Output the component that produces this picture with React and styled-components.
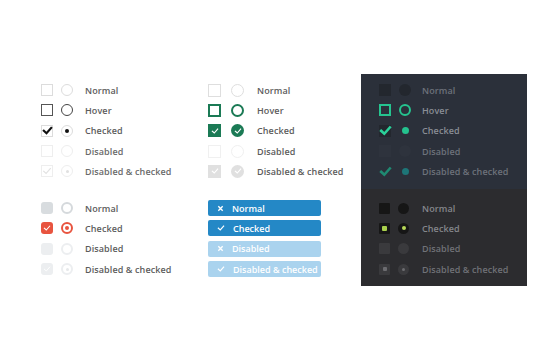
import React from "react";
import styled, { createGlobalStyle, css } from "styled-components";

const Global = createGlobalStyle`
  html, body { margin: 0; padding: 0; background: #fff; }
  body { font-family: "Open Sans", "Liberation Sans", sans-serif; }
`;

const Page = styled.div`
  width: 550px;
  height: 340px;
  padding: 74px 0 0 41px;
  box-sizing: border-box;
  display: grid;
  grid-template-columns: 167px 153px 166px;
  grid-template-rows: 115px 97px;
`;

const Cell = styled.div`
  padding: ${(p) => (p.$bottom ? "9px 0 0" : "6px 0 0")};
  ${(p) =>
    p.$dark &&
    css`
      background: ${p.$bottom ? "#2c2c2f" : "#2b303a"};
      padding-left: 18px;
    `}
`;

const Row = styled.div`
  display: flex;
  align-items: center;
  height: 20.3px;
`;

const Controls = styled.div`
  display: flex;
  align-items: center;
  gap: ${(p) => p.$gap}px;
  width: ${(p) => p.$w}px;
  flex: none;
`;

const Label = styled.span`
  font-size: 9px;
  font-weight: 600;
  letter-spacing: 0.1px;
  white-space: nowrap;
  color: ${(p) => p.$color || "#5c5c5c"};
`;

const Base = styled.span`
  position: relative;
  display: inline-flex;
  align-items: center;
  justify-content: center;
  box-sizing: border-box;
  flex: none;
  width: ${(p) => p.$s || 12}px;
  height: ${(p) => p.$s || 12}px;
  svg { position: absolute; }
`;

/* minimal */
const MinBox = styled(Base)`
  border: 1px solid ${(p) => (p.$st === "hover" ? "#555" : p.$st === "disabled" || p.$st === "dischecked" ? "#eeeeee" : "#dcdcdc")};
`;
const MinRadio = styled(Base)`
  border-radius: 50%;
  border: 1px solid ${(p) => (p.$st === "hover" ? "#444" : p.$st === "disabled" || p.$st === "dischecked" ? "#eeeeee" : "#dcdcdc")};
`;
const Dot = styled.span`
  width: ${(p) => p.$d}px;
  height: ${(p) => p.$d}px;
  border-radius: ${(p) => (p.$sq ? "1px" : "50%")};
  background: ${(p) => p.$c};
  ${(p) => p.$ring && css`box-shadow: 0 0 0 ${p.$ring}px ${p.$rc};`}
`;

/* flat red */
const FlatBox = styled(Base)`
  border-radius: 3px;
  background: ${(p) => (p.$st === "checked" ? "#e8543f" : p.$st === "normal" ? "#d8dcdf" : "#eceef0")};
`;
const FlatRadio = styled(Base)`
  border-radius: 50%;
  border: 2px solid ${(p) => (p.$st === "checked" ? "#e8543f" : p.$st === "normal" ? "#d5d9dc" : "#eceef0")};
  background: ${(p) => (p.$st === "checked" ? "#e8543f" : "#fff")};
`;

/* square green */
const SqBox = styled(Base)`
  ${(p) =>
    p.$st === "checked"
      ? css`background: #1b7a55;`
      : p.$st === "dischecked"
      ? css`background: #e0e0e0;`
      : p.$st === "hover"
      ? css`border: 2px solid #1b7a55;`
      : css`border: 1px solid ${p.$st === "disabled" ? "#f0f0f0" : "#dedede"};`}
`;
const SqRadio = styled(SqBox)`
  border-radius: 50%;
`;

/* dark */
const DarkBox = styled(Base)`
  background: ${(p) => (p.$st === "disabled" || p.$st === "dischecked" ? "#2e333d" : "#23272e")};
  ${(p) => p.$st === "hover" && css`background: transparent; border: 2px solid #25c48f;`}
  ${(p) => p.$st === "dischecked" && css`background: transparent;`}
`;
const DarkRadio = styled(DarkBox)`
  border-radius: 50%;
  ${(p) => (p.$st === "checked" || p.$st === "dischecked") && css`background: transparent;`}
`;

/* futurico */
const FutBox = styled(Base)`
  border-radius: 1px;
  background: ${(p) => (p.$st === "disabled" || p.$st === "dischecked" ? "#3a3a3d" : "#161616")};
`;
const FutRadio = styled(FutBox)`
  border-radius: 50%;
`;

const Tag = styled.div`
  display: flex;
  align-items: center;
  width: 113px;
  height: 16px;
  border-radius: 2px;
  background: ${(p) => (p.$off ? "#aad3ee" : "#2488c6")};
  color: #fff;
  font-size: 9px;
  font-weight: 600;
  white-space: nowrap;
  box-sizing: border-box;
  padding-left: 9px;
  gap: 8px;
`;

const Check = ({ c, w = 10, sw = 2 }) => (
  <svg width={w} height={w} viewBox="0 0 12 12">
    <path d="M2 6.3 L4.9 9 L10 3.2" fill="none" stroke={c} strokeWidth={sw} strokeLinecap="square" />
  </svg>
);

const Cross = () => (
  <svg width="7" height="7" viewBox="0 0 8 8">
    <path d="M1.5 1.5 L6.5 6.5 M6.5 1.5 L1.5 6.5" stroke="#fff" strokeWidth="1.6" />
  </svg>
);

const minimal = ["normal", "hover", "checked", "disabled", "dischecked"];
const names = { normal: "Normal", hover: "Hover", checked: "Checked", disabled: "Disabled", dischecked: "Disabled & checked" };
const flat = ["normal", "checked", "disabled", "dischecked"];

export default function App() {
  return (
    <>
      <Global />
      <Page>
        <Cell>
          {minimal.map((st) => (
            <Row key={st}>
              <Controls $w={44} $gap={8}>
                <MinBox $st={st}>
                  {st === "checked" && <Check c="#111" w={11} sw={2.4} />}
                  {st === "dischecked" && <Check c="#e2e2e2" w={10} sw={1.4} />}
                </MinBox>
                <MinRadio $st={st}>
                  {st === "checked" && <Dot $d={4} $c="#111" />}
                  {st === "dischecked" && <Dot $d={3} $c="#e0e0e0" />}
                </MinRadio>
              </Controls>
              <Label $color={st === "disabled" || st === "dischecked" ? "#6a6a6a" : "#5c5c5c"}>{names[st]}</Label>
            </Row>
          ))}
        </Cell>
        <Cell>
          {minimal.map((st) => (
            <Row key={st}>
              <Controls $w={49} $gap={10}>
                <SqBox $st={st} $s={13}>
                  {(st === "checked" || st === "dischecked") && <Check c="#fff" w={8} sw={1.7} />}
                </SqBox>
                <SqRadio $st={st} $s={13}>
                  {(st === "checked" || st === "dischecked") && <Check c="#fff" w={8} sw={1.7} />}
                </SqRadio>
              </Controls>
              <Label>{names[st]}</Label>
            </Row>
          ))}
        </Cell>
        <Cell $dark>
          {minimal.map((st) => (
            <Row key={st}>
              <Controls $w={43} $gap={8}>
                <DarkBox $st={st}>
                  {st === "checked" && <Check c="#2bd19a" w={13} sw={2.4} />}
                  {st === "dischecked" && <Check c="#1f8a72" w={13} sw={2.4} />}
                </DarkBox>
                <DarkRadio $st={st}>
                  {st === "checked" && <Dot $d={7} $c="#24c28e" />}
                  {st === "dischecked" && <Dot $d={7} $c="#1d7577" />}
                </DarkRadio>
              </Controls>
              <Label $color={st === "hover" || st === "checked" ? "#8a8e96" : "#6d727b"}>{names[st]}</Label>
            </Row>
          ))}
        </Cell>
        <Cell $bottom>
          {flat.map((st) => (
            <Row key={st}>
              <Controls $w={44} $gap={8}>
                <FlatBox $st={st}>
                  {st === "checked" && <Check c="#fff" w={8} sw={1.6} />}
                  {st === "dischecked" && <Check c="#fff" w={8} sw={1.3} />}
                </FlatBox>
                <FlatRadio $st={st}>
                  {st === "checked" && <Dot $d={4} $c="#e8543f" $ring={2} $rc="#fff" />}
                  {st === "dischecked" && <Dot $d={3} $c="#e6e8ea" />}
                </FlatRadio>
              </Controls>
              <Label>{names[st]}</Label>
            </Row>
          ))}
        </Cell>
        <Cell $bottom>
          {flat.map((st) => (
            <Row key={st}>
              <Tag $off={st === "disabled" || st === "dischecked"}>
                {st === "normal" || st === "disabled" ? (
                  <Cross />
                ) : (
                  <Check c="#fff" w={8} sw={1.8} />
                )}
                <span>{names[st]}</span>
              </Tag>
            </Row>
          ))}
        </Cell>
        <Cell $dark $bottom>
          {flat.map((st) => (
            <Row key={st}>
              <Controls $w={43} $gap={8}>
                <FutBox $st={st} $s={11}>
                  {st === "checked" && <Dot $sq $d={5} $c="#a9d04c" />}
                  {st === "dischecked" && <Dot $sq $d={4} $c="#6c6c70" />}
                </FutBox>
                <FutRadio $st={st} $s={11}>
                  {st === "checked" && <Dot $d={4} $c="#b7d858" />}
                  {st === "dischecked" && <Dot $d={3} $c="#6c6c70" />}
                </FutRadio>
              </Controls>
              <Label $color={st === "normal" || st === "checked" ? "#85878c" : "#707277"}>{names[st]}</Label>
            </Row>
          ))}
        </Cell>
      </Page>
    </>
  );
}
